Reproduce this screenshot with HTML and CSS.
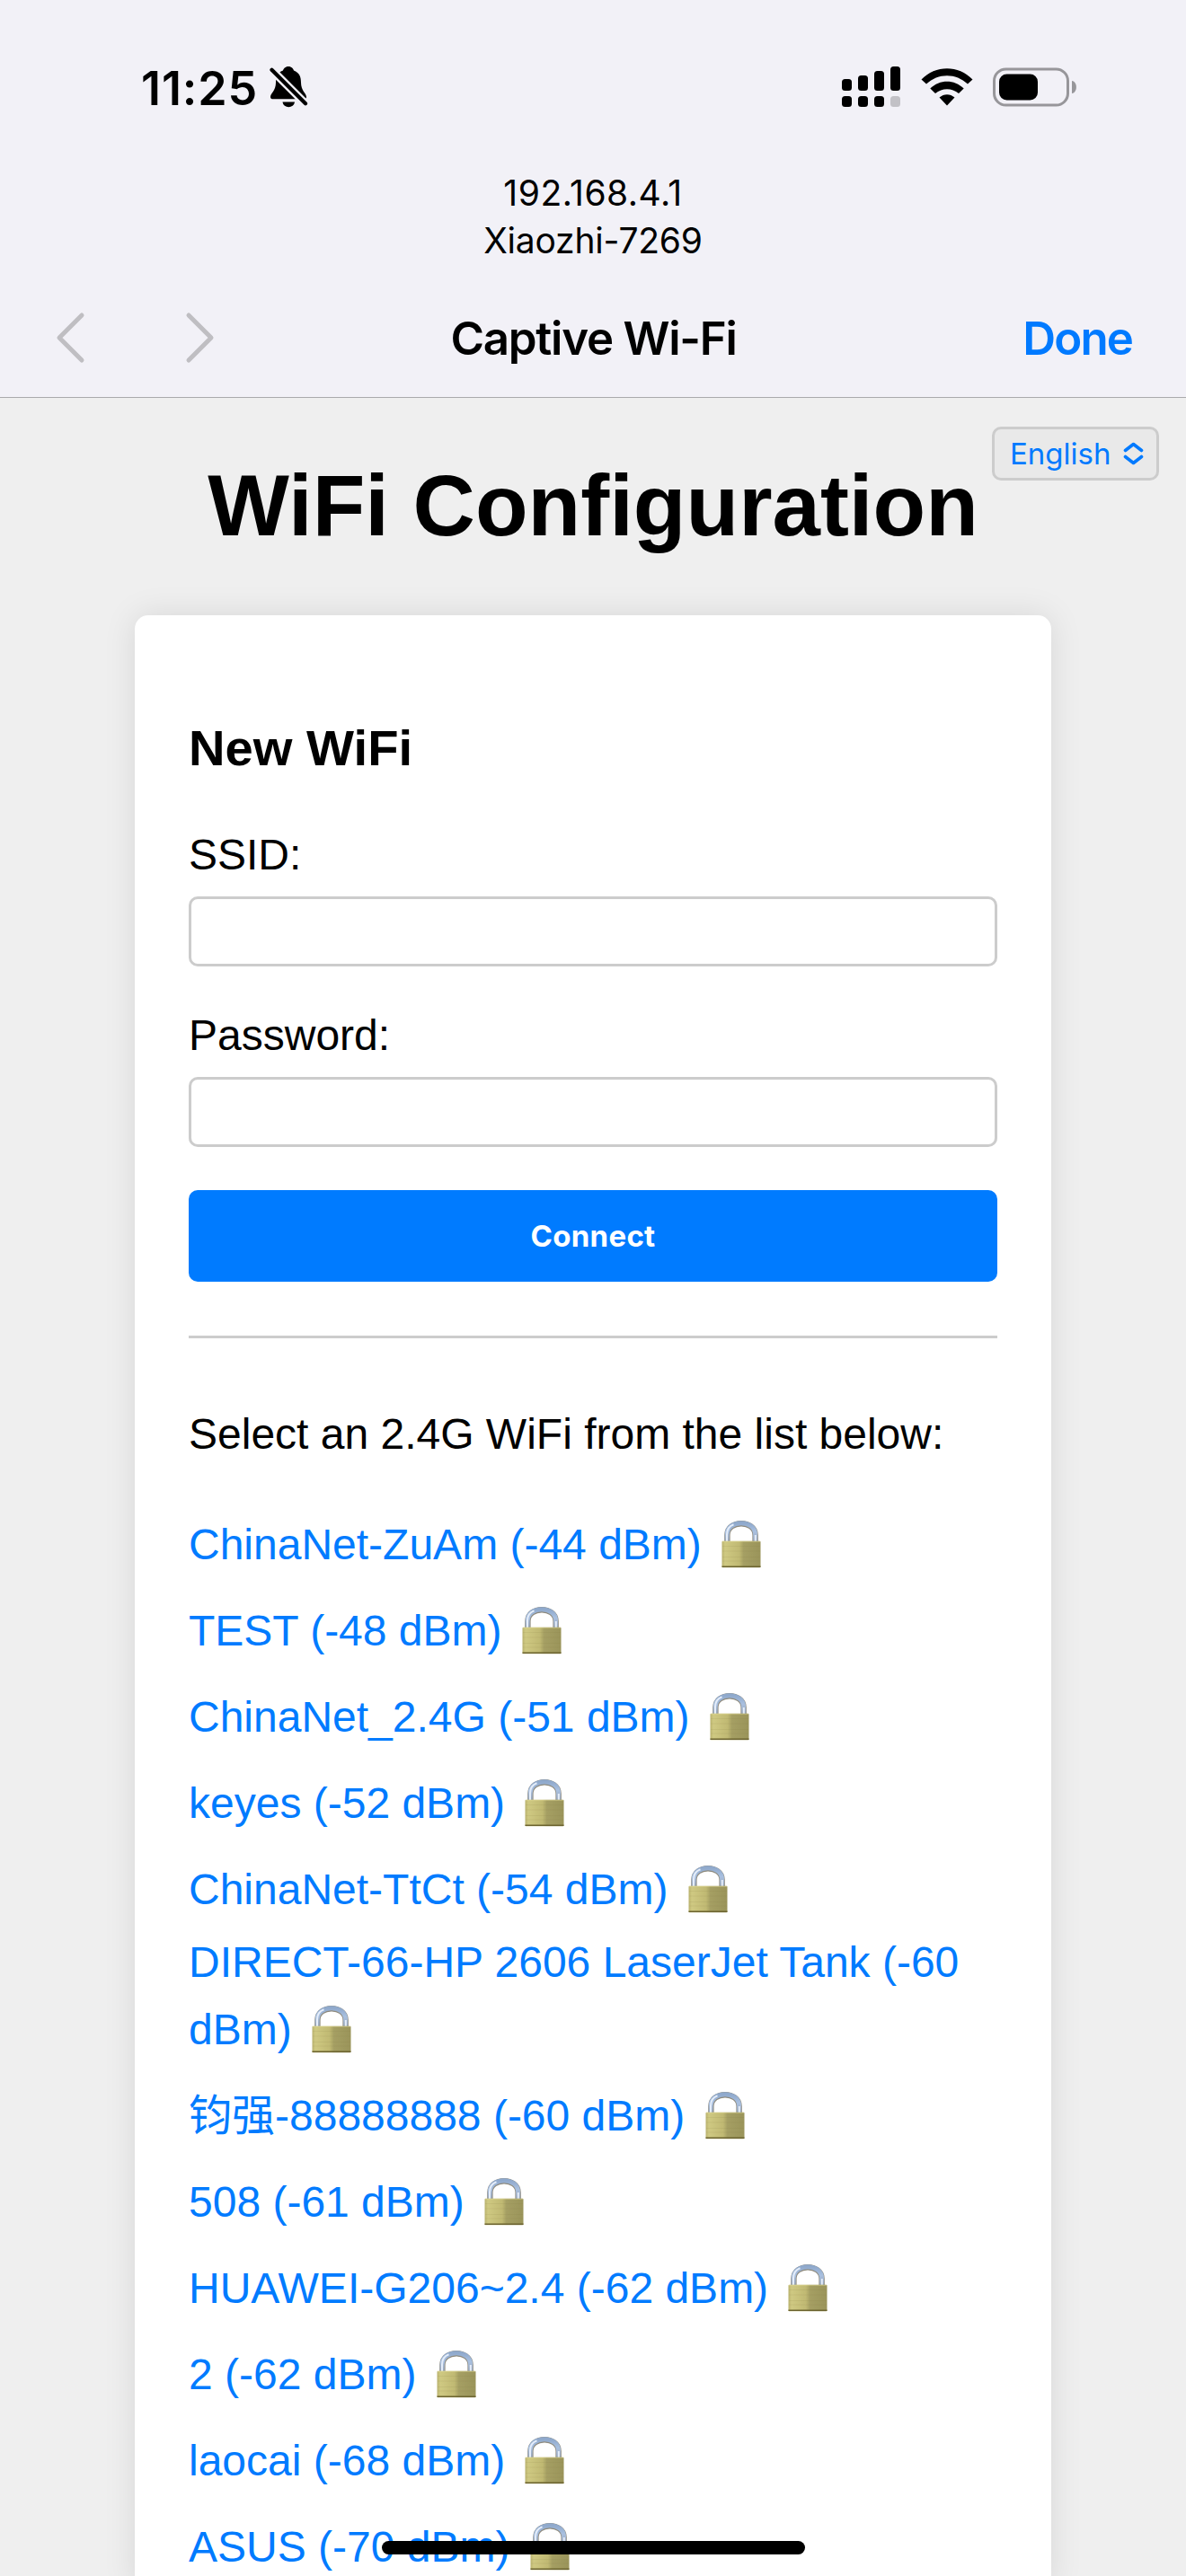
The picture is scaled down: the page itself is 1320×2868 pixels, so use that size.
FILE: index.html
```html
<!DOCTYPE html>
<html lang="en">
<head>
<meta charset="utf-8">
<title>WiFi Configuration</title>
<link rel="stylesheet" href="styles.css">
</head>
<body>
<svg class="defs" aria-hidden="true">
  <defs>
    <linearGradient id="brass" x1="0" y1="0" x2="1" y2="0">
      <stop offset="0" stop-color="#b9b26e"/><stop offset=".08" stop-color="#cfc982"/>
      <stop offset=".45" stop-color="#c0b973"/><stop offset=".56" stop-color="#a59f63"/>
      <stop offset="1" stop-color="#9a945a"/>
    </linearGradient>
    <linearGradient id="steel" x1="0" y1="0" x2="0" y2="1">
      <stop offset="0" stop-color="#8fa9cc"/><stop offset=".45" stop-color="#a9c0e0"/>
      <stop offset="1" stop-color="#98a4b6"/>
    </linearGradient>
    <symbol id="lock" viewBox="0 0 60 60">
      <path d="M14.400 27V19C14.400 2 45.600 2 45.600 19V27" fill="none" stroke="#8d897c" stroke-width="6.400"/>
      <path d="M14.200 27V18.500C14.200 1.400 45.600 1.400 45.600 18.500V27" fill="none" stroke="url(#steel)" stroke-width="5"/>
      <path d="M14 27V18.500C14 13 17 9 21.500 7.300M45.800 27V19" fill="none" stroke="#e4edfa" stroke-width="2"/>
      <rect x="8.500" y="25.700" width="43" height="29.600" rx="1" fill="url(#brass)"/>
      <path d="M9 31.500H51M9 37H51M9 43.500H51M9 48H51" stroke="#827b42" stroke-opacity=".12"/>
      <path d="M9 26.300H51" stroke="#e3dc98" stroke-opacity=".5"/>
      <path d="M8.500 54.300H51.500" stroke="#6c6430" stroke-width="1.600"/>
    </symbol>
  </defs>
</svg>
<header class="chrome">
  <div class="status">
    <div class="clock">
      <span class="time">11:25</span>
      <svg class="bell" width="44" height="48" viewBox="0 0 44 48">
        <path d="M21 1C17.500 1 15.500 3.500 15 5.500C8 8 7 14 7 19C7 28 1 31 1 35C1 36.500 2 37.300 4 37.300H38C40 37.300 41 36.500 41 35C41 31 35 28 35 19C35 12 33 8 27 5.500C26.500 3.500 24.500 1 21 1Z"/>
        <path d="M14.500 40.500H28C27 48 15.500 48 14.500 40.500Z"/>
        <path d="M-2 0.300L46 48.300" stroke="#f2f1f7" stroke-width="9" fill="none"/>
        <path d="M2.500 4.800L40 42.300" stroke="#000" stroke-width="4.200" stroke-linecap="round"/>
      </svg>
    </div>
    <div class="signals">
      <svg width="66" height="46" viewBox="0 0 66 46">
        <rect y="14" width="11" height="13" rx="3.500"/><rect x="18" y="10" width="11" height="17" rx="3.500"/>
        <rect x="36" y="5" width="11" height="22" rx="3.500"/><rect x="54" width="11" height="27" rx="3.500"/>
        <rect y="33" width="11" height="12" rx="3.500"/><rect x="18" y="33" width="11" height="12" rx="3.500"/>
        <rect x="36" y="33" width="11" height="12" rx="3.500"/><rect x="54" y="33" width="11" height="12" rx="3.500" fill="#c2c1c6"/>
      </svg>
      <svg width="58" height="44" viewBox="0 0 58 44">
        <path d="M0.500 13.500C16 -3 42 -3 57.500 13.500L52 18.500C39 6 19 6 6 18.500Z"/>
        <path d="M10.300 23.500C21 13 37 13 47.700 23.500L42 29C34.500 22.500 23.500 22.500 16 29Z"/>
        <path d="M20.500 33.500C25.500 29 32.500 29 37.500 33.500L29 42.500Z"/>
      </svg>
      <svg width="94" height="44" viewBox="0 0 94 44">
        <rect x="1.500" y="2" width="82" height="40" rx="13" fill="none" stroke="#97969a" stroke-width="3"/>
        <rect x="7" y="7.500" width="43" height="29" rx="8.500"/>
        <path d="M88 15C94.500 16 94.500 28 88 29Z" fill="#97969a"/>
      </svg>
    </div>
  </div>
  <div class="network"><div class="address">192.168.4.1</div><div class="ssid-name">Xiaozhi-7269</div></div>
  <nav class="nav">
    <div class="arrows">
      <svg width="34" height="58" viewBox="0 0 34 58"><path d="M30 4L5 29L30 54"/></svg>
      <svg width="34" height="58" viewBox="0 0 34 58"><path d="M4 4L29 29L4 54"/></svg>
    </div>
    <div class="title">Captive Wi-Fi</div>
    <div class="done">Done</div>
  </nav>
</header>
<main class="page">
  <div class="language">
    <span>English</span>
    <svg width="23" height="26" viewBox="0 0 23 26"><path d="M2.500 9.500L11.500 2.500L20.500 9.500M2.500 16.500L11.500 23.500L20.500 16.500"/></svg>
  </div>
  <h1>WiFi Configuration</h1>
  <section class="card">
    <form>
      <h3>New WiFi</h3>
      <label for="ssid">SSID:</label>
      <input id="ssid" type="text">
      <label for="password">Password:</label>
      <input id="password" type="password">
      <button type="button">Connect</button>
    </form>
    <p class="hint">Select an 2.4G WiFi from the list below:</p>
    <ul class="networks">
      <li>ChinaNet-ZuAm (-44 dBm) <svg class="lock"><use href="#lock"/></svg></li>
      <li>TEST (-48 dBm) <svg class="lock"><use href="#lock"/></svg></li>
      <li>ChinaNet_2.4G (-51 dBm) <svg class="lock"><use href="#lock"/></svg></li>
      <li>keyes (-52 dBm) <svg class="lock"><use href="#lock"/></svg></li>
      <li>ChinaNet-TtCt (-54 dBm) <svg class="lock"><use href="#lock"/></svg></li>
      <li class="wrapped">DIRECT-66-HP 2606 LaserJet Tank (-60 dBm) <svg class="lock"><use href="#lock"/></svg></li>
      <li><span lang="zh-CN">钧强</span>-88888888 (-60 dBm) <svg class="lock"><use href="#lock"/></svg></li>
      <li>508 (-61 dBm) <svg class="lock"><use href="#lock"/></svg></li>
      <li>HUAWEI-G206~2.4 (-62 dBm) <svg class="lock"><use href="#lock"/></svg></li>
      <li>2 (-62 dBm) <svg class="lock"><use href="#lock"/></svg></li>
      <li>laocai (-68 dBm) <svg class="lock"><use href="#lock"/></svg></li>
      <li>ASUS (-70 dBm) <svg class="lock"><use href="#lock"/></svg></li>
    </ul>
  </section>
</main>
<div class="home-indicator"></div>
</body>
</html>
```
FILE: styles.css
```css
* { box-sizing: border-box; }
body {
  margin: 0;
  height: 2868px;
  overflow: hidden;
  position: relative;
  display: flex;
  flex-direction: column;
  background: #efefef;
  color: #000;
  font-family: "Liberation Sans", "Noto Sans CJK SC", sans-serif;
  font-size: 48px;
}
.defs { position: absolute; width: 0; height: 0; }

.chrome {
  flex: none;
  height: 443px;
  background: #f2f1f7;
  border-bottom: 1px solid #aaaaac;
  font-family: Inter, sans-serif;
}
.status {
  height: 188px;
  padding: 6px 121px 0 157px;
  display: flex;
  justify-content: space-between;
  align-items: center;
}
.clock { display: flex; align-items: center; gap: 11px; }
.time {
  width: 132px;
  padding-top: 3px;
  font-size: 52px;
  font-weight: 600;
  line-height: 64px;
  letter-spacing: 0.9px;
  white-space: nowrap;
}
.bell { overflow: hidden; }
.signals { display: flex; align-items: center; gap: 22px; }
.network { font-size: 39px; line-height: 53px; text-align: center; }
.address { letter-spacing: 0.5px; }
.ssid-name { letter-spacing: -0.2px; }
.nav {
  margin-top: 16px;
  height: 132px;
  padding: 0 60px 0 61px;
  display: grid;
  grid-template-columns: 1fr auto 1fr;
  align-items: center;
  font-size: 51px;
  font-weight: 600;
}
.arrows { display: flex; gap: 111px; }
.arrows path { fill: none; stroke: #bfbec2; stroke-width: 5; stroke-linecap: round; stroke-linejoin: round; }
.title { letter-spacing: -1.25px; }
.done { color: #007aff; text-align: right; letter-spacing: -1.9px; }

.page { flex: 1; position: relative; padding: 65px 150px 0; display: flex; flex-direction: column; }
.language {
  position: absolute;
  top: 32px;
  right: 30px;
  width: 186px;
  height: 60px;
  padding: 0 14px 0 17px;
  display: flex;
  align-items: center;
  justify-content: space-between;
  border: 3px solid #ccc;
  border-radius: 10px;
  background: #e9e9e9;
  color: #007aff;
  font-family: Inter, sans-serif;
  font-size: 33px;
}
.language path { fill: none; stroke: #007aff; stroke-width: 3.6; stroke-linecap: round; stroke-linejoin: round; }
h1 { margin: 0 0 67px; font-size: 96px; line-height: 110px; text-align: center; white-space: nowrap; }
.card {
  flex: 1;
  padding: 115px 60px 0;
  background: #fff;
  border-radius: 15px;
  box-shadow: 0 0 36px rgba(0, 0, 0, 0.1);
}
form { display: flex; flex-direction: column; padding-bottom: 60px; border-bottom: 3px solid #ccc; }
h3 { margin: 0 0 59px; font-size: 56.16px; line-height: 65px; }
label { line-height: 56px; margin-bottom: 18px; }
input {
  height: 78px;
  margin: 0 0 49px;
  border: 3px solid #ccc;
  border-radius: 10px;
  background: #fff;
}
button {
  height: 102px;
  margin-top: -1px;
  border: 0;
  border-radius: 10px;
  background: #007bff;
  color: #fff;
  font: 700 33px Inter, sans-serif;
  letter-spacing: 0.3px;
}
.hint { margin: 79px 0 47px; line-height: 56px; }
.networks { list-style: none; margin: 0; padding: 0; color: #007bff; }
.networks li { padding: 10px 0 11px; line-height: 75px; }
.networks .wrapped { margin-top: -15px; }
.lock { width: 60px; height: 60px; margin-left: 1px; vertical-align: -14px; }

.home-indicator {
  position: absolute;
  left: 425px;
  top: 2829px;
  width: 471px;
  height: 15px;
  border-radius: 8px;
  background: #000;
}
```
